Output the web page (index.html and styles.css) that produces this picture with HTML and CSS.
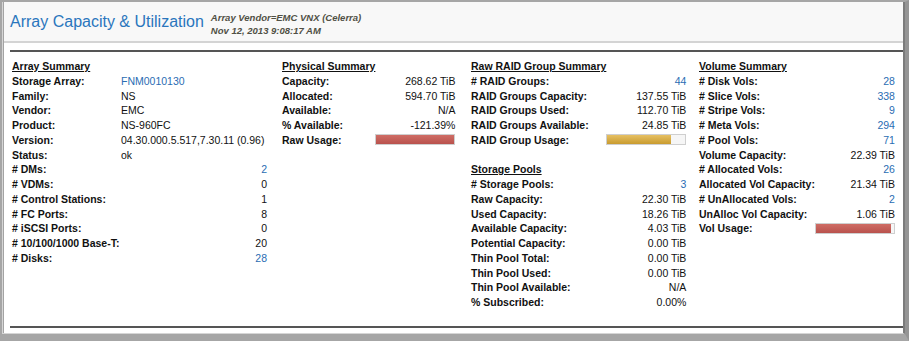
FILE: index.html
```html
<!DOCTYPE html>
<html>
<head>
<meta charset="utf-8">
<link rel="stylesheet" href="styles.css">
</head>
<body>
<div class="frame">
  <div class="inner">
    <div class="inner2">
      <div class="header">
        <div class="title">Array Capacity &amp; Utilization</div>
        <div class="sub">
          <div class="sub1">Array Vendor=EMC VNX (Celerra)</div>
          <div class="sub2">Nov 12, 2013 9:08:17 AM</div>
        </div>
      </div>
      <div class="content">
        <div class="cols">
          <div class="col c1">
            <div class="h">Array Summary</div><div></div>
            <div class="l">Storage Array:</div><div class="v link">FNM0010130</div>
            <div class="l">Family:</div><div class="v">NS</div>
            <div class="l">Vendor:</div><div class="v">EMC</div>
            <div class="l">Product:</div><div class="v">NS-960FC</div>
            <div class="l">Version:</div><div class="v">04.30.000.5.517,7.30.11 (0.96)</div>
            <div class="l">Status:</div><div class="v">ok</div>
            <div class="l"># DMs:</div><div class="v num link">2</div>
            <div class="l"># VDMs:</div><div class="v num">0</div>
            <div class="l"># Control Stations:</div><div class="v num">1</div>
            <div class="l"># FC Ports:</div><div class="v num">8</div>
            <div class="l"># iSCSI Ports:</div><div class="v num">0</div>
            <div class="l"># 10/100/1000 Base-T:</div><div class="v num">20</div>
            <div class="l"># Disks:</div><div class="v num link">28</div>
          </div>
          <div class="col c2">
            <div class="h">Physical Summary</div><div></div>
            <div class="l">Capacity:</div><div class="v num">268.62 TiB</div>
            <div class="l">Allocated:</div><div class="v num">594.70 TiB</div>
            <div class="l">Available:</div><div class="v num">N/A</div>
            <div class="l">% Available:</div><div class="v num">-121.39%</div>
            <div class="l">Raw Usage:</div><div class="v num"><div class="bar"><div class="fill red" style="width:100%"></div></div></div>
          </div>
          <div class="col c3">
            <div class="h">Raw RAID Group Summary</div><div></div>
            <div class="l"># RAID Groups:</div><div class="v num link">44</div>
            <div class="l">RAID Groups Capacity:</div><div class="v num">137.55 TiB</div>
            <div class="l">RAID Groups Used:</div><div class="v num">112.70 TiB</div>
            <div class="l">RAID Groups Available:</div><div class="v num">24.85 TiB</div>
            <div class="l">RAID Group Usage:</div><div class="v num"><div class="bar"><div class="fill gold" style="width:82%"></div></div></div>
            <div class="l blank"></div><div></div>
            <div class="h">Storage Pools</div><div></div>
            <div class="l"># Storage Pools:</div><div class="v num link">3</div>
            <div class="l">Raw Capacity:</div><div class="v num">22.30 TiB</div>
            <div class="l">Used Capacity:</div><div class="v num">18.26 TiB</div>
            <div class="l">Available Capacity:</div><div class="v num">4.03 TiB</div>
            <div class="l">Potential Capacity:</div><div class="v num">0.00 TiB</div>
            <div class="l">Thin Pool Total:</div><div class="v num">0.00 TiB</div>
            <div class="l">Thin Pool Used:</div><div class="v num">0.00 TiB</div>
            <div class="l">Thin Pool Available:</div><div class="v num">N/A</div>
            <div class="l">% Subscribed:</div><div class="v num">0.00%</div>
          </div>
          <div class="col c4">
            <div class="h">Volume Summary</div><div></div>
            <div class="l"># Disk Vols:</div><div class="v num link">28</div>
            <div class="l"># Slice Vols:</div><div class="v num link">338</div>
            <div class="l"># Stripe Vols:</div><div class="v num link">9</div>
            <div class="l"># Meta Vols:</div><div class="v num link">294</div>
            <div class="l"># Pool Vols:</div><div class="v num link">71</div>
            <div class="l">Volume Capacity:</div><div class="v num">22.39 TiB</div>
            <div class="l"># Allocated Vols:</div><div class="v num link">26</div>
            <div class="l">Allocated Vol Capacity:</div><div class="v num">21.34 TiB</div>
            <div class="l"># UnAllocated Vols:</div><div class="v num link">2</div>
            <div class="l">UnAlloc Vol Capacity:</div><div class="v num">1.06 TiB</div>
            <div class="l">Vol Usage:</div><div class="v num"><div class="bar"><div class="fill red" style="width:96%"></div></div></div>
          </div>
        </div>
      </div>
    </div>
  </div>
</div>
</body>
</html>
```

FILE: styles.css
```css
html, body {
  margin: 0;
  padding: 0;
  background: #ffffff;
}
body {
  font-family: "Liberation Sans", Arial, sans-serif;
  color: #111;
}
.frame {
  width: 909px;
  height: 341px;
  box-sizing: border-box;
  border-style: solid;
  border-width: 2px 4px 7px 2px;
  border-color: #a6a6a6 #959595 #a6a6a6 #a6a6a6;
  background: #fff;
}
.inner {
  height: 100%;
  box-sizing: border-box;
  border-left: 1px solid #d6d6d6;
  border-bottom: 1px solid #d6d6d6;
  border-right: 2px solid #7c7c7c;
}
.inner2 {
  height: 100%;
  box-sizing: border-box;
  border-left: 1px solid #a3a3a3;
}
.header {
  height: 41px;
  box-sizing: border-box;
  background: #f8f8f8;
  border-bottom: 2px solid #d4d4d4;
  display: flex;
  align-items: center;
  padding: 0 0 0 6px;
  gap: 7px;
}
.title {
  font-size: 16px;
  color: #2a76bd;
  margin-top: 1px;
}
.sub {
  font-size: 9.5px;
  font-weight: bold;
  font-style: italic;
  color: #505045;
  line-height: 13px;
  margin-top: 5px;
}
.content {
  margin: 7px 0 0 6px;
  height: 278px;
  box-sizing: border-box;
  border-top: 2px solid #555;
  border-bottom: 2px solid #555;
}
.cols {
  display: flex;
  padding: 7px 0 0 2px;
  font-size: 10.5px;
  line-height: 14.75px;
}
.col {
  display: grid;
  grid-auto-rows: 14.75px;
  align-content: start;
}
.c1 { width: 255px; grid-template-columns: 109px 1fr; }
.c2 { width: 172px; grid-template-columns: 1fr auto; margin-left: 15px; }
.c3 { width: 211px; grid-template-columns: 1fr auto; margin-left: 17px; }
.c4 { width: 193px; grid-template-columns: 1fr auto; margin-left: 17px; }
.h {
  font-weight: bold;
  text-decoration: underline;
  white-space: nowrap;
}
.l {
  font-weight: bold;
  white-space: nowrap;
}
.v {
  white-space: nowrap;
  color: #111;
}
.num {
  text-align: right;
}
.link {
  color: #2a6db3;
}
.bar {
  display: inline-block;
  vertical-align: middle;
  width: 80px;
  height: 11px;
  box-sizing: border-box;
  border: 1px solid #cfcfcf;
  background: #f6f6f6;
  margin-top: -2px;
  text-align: left;
}
.fill {
  height: 100%;
}
.red {
  background: linear-gradient(to bottom, #cf6d65, #b9524d);
}
.gold {
  background: linear-gradient(to bottom, #e6c063, #c99b2f);
}
```
